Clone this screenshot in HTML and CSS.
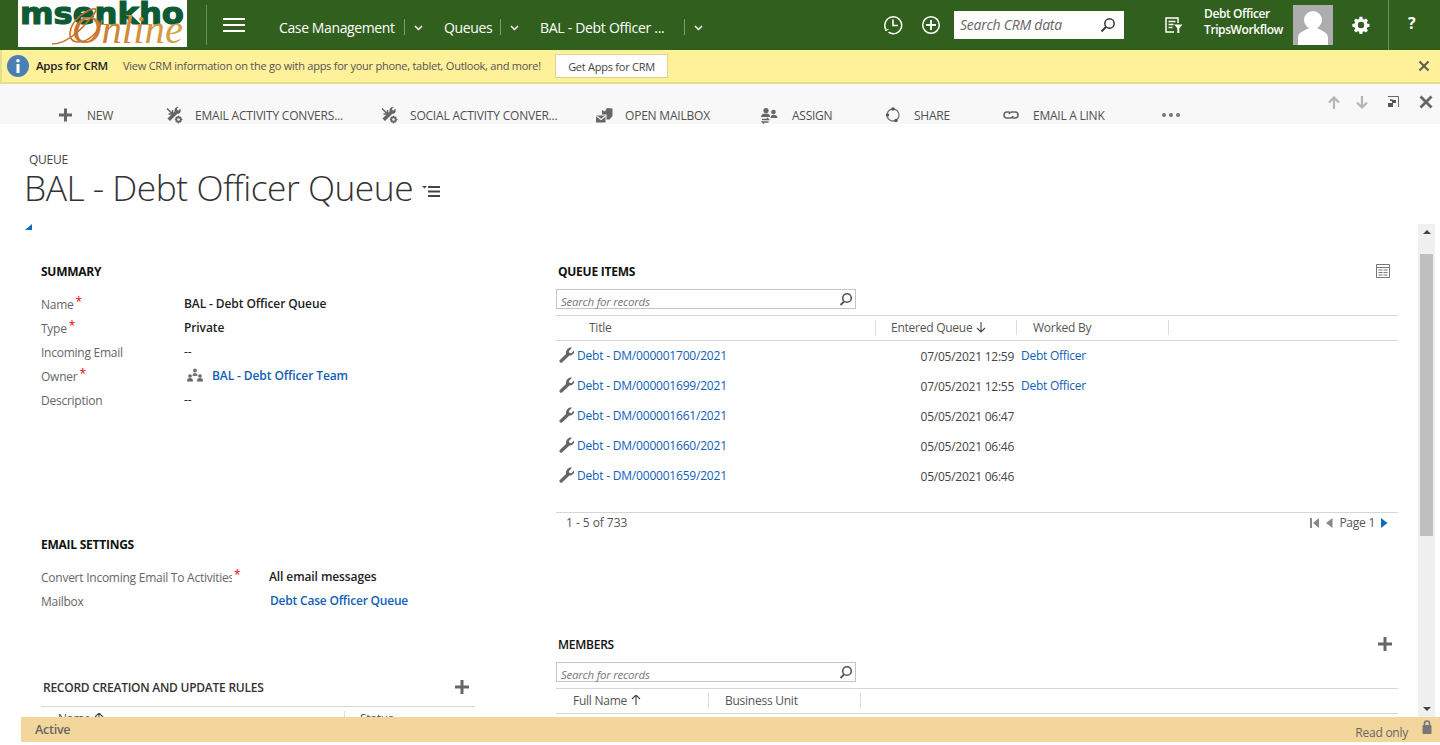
FILE: index.html
```html
<!DOCTYPE html>
<html lang="en">
<head>
<meta charset="utf-8">
<title>BAL - Debt Officer Queue</title>
<link rel="stylesheet" href="styles.css">
</head>
<body>
<header class="nav">
  <div class="logo">
    <svg width="169" height="47" viewBox="0 0 169 47">
      <defs><linearGradient id="lg" x1="0" x2="1" y1="0" y2="0"><stop offset="0" stop-color="#c8702a"/><stop offset="1" stop-color="#d6a648"/></linearGradient></defs>
      <text x="2" y="24" class="logo-top" textLength="164" lengthAdjust="spacingAndGlyphs">msenkho</text>
      <text x="54" y="43" class="logo-script" textLength="111" lengthAdjust="spacingAndGlyphs" fill="url(#lg)">Online</text>
      <path d="M34 44C52 44 68 24 76 14C82 6 72 8 62 16C50 26 48 42 60 42C72 42 82 30 84 20" fill="none" stroke="#c8702a" stroke-width="1.6"/>
    </svg>
  </div>
  <span class="nav-rule"></span>
  <span class="burger"><i></i><i></i><i></i></span>
  <nav class="crumbs">
    <span class="crumb c1">Case Management</span><span class="crumb-sep"></span><svg class="chev" width="9" height="6" viewBox="0 0 9 6"><path d="M1 1l3.500 3.500L8 1" fill="none" stroke="#fff" stroke-width="1.500"/></svg>
    <span class="crumb c2">Queues</span><span class="crumb-sep"></span><svg class="chev" width="9" height="6" viewBox="0 0 9 6"><path d="M1 1l3.500 3.500L8 1" fill="none" stroke="#fff" stroke-width="1.500"/></svg>
    <span class="crumb c3">BAL - Debt Officer ...</span><span class="crumb-sep"></span><svg class="chev" width="9" height="6" viewBox="0 0 9 6"><path d="M1 1l3.500 3.500L8 1" fill="none" stroke="#fff" stroke-width="1.500"/></svg>
  </nav>
  <svg class="ic-clock" width="20" height="20" viewBox="0 0 20 20"><path d="M3 14.500A8.400 8.400 0 1 1 5.500 17.200" fill="none" stroke="#fff" stroke-width="1.500"/><path d="M2 12.500l.8 3 2.600-1.200" fill="none" stroke="#fff" stroke-width="1.200"/><path d="M10 4.500V10.500H15" fill="none" stroke="#fff" stroke-width="1.600"/></svg>
  <svg class="ic-add" width="20" height="20" viewBox="0 0 20 20"><circle cx="10" cy="10" r="8.300" fill="none" stroke="#fff" stroke-width="1.500"/><path d="M10 5v10M5 10h10" stroke="#fff" stroke-width="1.800"/></svg>
  <div class="crm-search"><span>Search CRM data</span><svg width="16" height="16" viewBox="0 0 16 16"><circle cx="9.500" cy="6.500" r="4.700" fill="none" stroke="#333" stroke-width="1.500"/><path d="M6 10l-4.500 4.500" stroke="#333" stroke-width="1.800"/></svg></div>
  <svg class="ic-filter" width="18" height="17" viewBox="0 0 18 17"><path d="M13 6V1H1v14h8" fill="none" stroke="#fff" stroke-width="1.500"/><path d="M3.500 4.500h7M3.500 7.500h5M3.500 10.500h4" stroke="#fff" stroke-width="1.300"/><path d="M9 7.500h8.500l-3.200 3.700V16h-2v-4.800z" fill="#fff"/></svg>
  <div class="user"><div>Debt Officer</div><div>TripsWorkflow</div></div>
  <div class="avatar"><svg width="40" height="40" viewBox="0 0 40 40"><circle cx="20" cy="15" r="9" fill="#fff"/><path d="M5 40V33C5 27 11 26 16 23H24C29 26 35 27 35 33V40z" fill="#fff"/></svg></div>
  <svg class="ic-gear" width="18" height="18" viewBox="0 0 18 18"><path d="M7.500 1h3l.4 2.200 1.500.7 1.900-1.200 2.100 2.100-1.200 1.900.7 1.500 2.100.3v3l-2.200.4-.7 1.500 1.300 1.900-2.100 2.100-1.900-1.300-1.500.7-.4 2.200h-3l-.4-2.200-1.500-.7-1.900 1.300L1.700 15.300 3 13.400l-.7-1.500L0 11.500v-3l2.300-.4.7-1.500L1.700 4.800l2.100-2.100 1.900 1.200 1.400-.7z" transform="scale(.95) translate(.4 -.1)" fill="#fff"/><circle cx="9" cy="9" r="3.200" fill="#315f1d"/></svg>
  <span class="nav-rule rule-end"></span>
  <span class="help">?</span>
</header>

<section class="notice">
  <svg class="ic-info" width="22" height="22" viewBox="0 0 22 22"><circle cx="11" cy="11" r="11" fill="#4a7fb5"/><rect x="9.500" y="9" width="3" height="9" fill="#fff"/><circle cx="11" cy="5.800" r="1.800" fill="#fff"/></svg>
  <strong class="notice-title">Apps for CRM</strong>
  <span class="notice-text">View CRM information on the go with apps for your phone, tablet, Outlook, and more!</span>
  <span class="notice-btn">Get Apps for CRM</span>
  <svg class="notice-x" width="12" height="12" viewBox="0 0 12 12"><path d="M1.500 1.500l9 9M10.500 1.500l-9 9" stroke="#555" stroke-width="1.800"/></svg>
</section>

<section class="cmdbar">
  <div class="cmds">
    <div class="cmd"><svg width="16" height="16" viewBox="0 0 16 16"><path d="M7.500 1.500v13M1 8h13" stroke="#666" stroke-width="3"/></svg><span>NEW</span></div>
    <div class="cmd"><svg width="17" height="17" viewBox="0 0 17 17"><use href="#tools"/></svg><span class="cmd-tight">EMAIL ACTIVITY CONVERS...</span></div>
    <div class="cmd"><svg width="17" height="17" viewBox="0 0 17 17"><use href="#tools"/></svg><span class="cmd-tight">SOCIAL ACTIVITY CONVER...</span></div>
    <div class="cmd"><svg width="17" height="16" viewBox="0 0 17 16"><path d="M0 8.500h9.500V15.500H0z" fill="#666"/><path d="M.5 9l4.500 3.500L9.500 9" fill="none" stroke="#f8f8f8" stroke-width="1.200"/><path d="M6 7.500V3l3 1.500L11 1l5.500 0.500V9l-3 3.500H10.500V7.500z" fill="#666"/></svg><span class="cmd-tight">OPEN MAILBOX</span></div>
    <div class="cmd"><svg width="17" height="17" viewBox="0 0 17 17"><circle cx="5" cy="3.500" r="2.600" fill="#666"/><circle cx="12.500" cy="5" r="2.300" fill="#666"/><path d="M0 10c0-3 3-3.500 5-3.500s4 .5 4 3.500zM9.500 11c.5-2.500 1-3.300 3-3.300s4 .8 4 3.300z" fill="#666"/><path d="M1 12.500h6.500l-1.500-1.500M7.500 15H1.500l1.500 1.500" fill="none" stroke="#666" stroke-width="1.400"/></svg><span class="cmd-wide">ASSIGN</span></div>
    <div class="cmd"><svg width="16" height="16" viewBox="0 0 16 16"><circle cx="8" cy="8" r="6" fill="none" stroke="#777" stroke-width="1.300"/><circle cx="8" cy="2" r="1.700" fill="#555"/><circle cx="2.500" cy="8" r="1.700" fill="#555"/><circle cx="11" cy="13.500" r="1.700" fill="#555"/></svg><span>SHARE</span></div>
    <div class="cmd"><svg width="16" height="16" viewBox="0 0 16 16"><path d="M6.500 5H4a3 3 0 0 0 0 6h3.500a3 3 0 0 0 2.500-2M9.500 11H12a3 3 0 0 0 0-6H8.500A3 3 0 0 0 6 7" fill="none" stroke="#666" stroke-width="1.600"/></svg><span class="cmd-link">EMAIL A LINK</span></div>
    <div class="cmd-more"><i></i><i></i><i></i></div>
  </div>
  <div class="rec-tools">
    <svg width="12" height="13" viewBox="0 0 12 13"><path d="M6 13V2M1 6.500L6 1.500l5 5" fill="none" stroke="#b4b4b4" stroke-width="2.200"/></svg>
    <svg width="12" height="13" viewBox="0 0 12 13"><path d="M6 0v11M1 6.500l5 5 5-5" fill="none" stroke="#b4b4b4" stroke-width="2.200"/></svg>
    <svg width="12" height="12" viewBox="0 0 12 12"><path d="M1 .5h10.500V11" fill="none" stroke="#666"/><path d="M7 4h2v3H6v4H1V7h4V5H3V3z" fill="#555"/></svg>
    <svg width="14" height="14" viewBox="0 0 14 14"><path d="M1.500 1.500l11 11M12.500 1.500l-11 11" stroke="#666" stroke-width="2.800"/></svg>
  </div>
</section>

<svg class="defs" width="0" height="0">
  <defs>
    <g id="tools">
      <path d="M1 1.500 6 6.500M6.500 3V7H2.500" fill="none" stroke="#666" stroke-width="1.500"/>
      <path d="M14.500 1.500l-2 2-1.300-.6-.2-1.400 1.800-1.500C9.800-.3 8 1.800 8.700 4.200L1.500 11.500l2.500 2.500 7.300-7.200c2.600.6 4-1.800 3.200-5.300z" fill="#666"/>
      <circle cx="12.500" cy="12.500" r="2.300" fill="none" stroke="#666" stroke-width="1.900"/>
      <path d="M12.500 8.800v1.500M12.500 14.700v1.800M8.800 12.500h1.500M14.700 12.500h1.800M9.900 9.900l1 1M14.100 14.100l1 1M15.100 9.900l-1 1M10.900 14.100l-1 1" stroke="#666" stroke-width="1.200"/>
    </g>
    <path id="wrench" d="M14 .8 10.800 3.900l.6 1.900 1.900.5 2.800-3c.6 2.800-1.500 5.500-4.600 5.100L4 15.500c-1.200 1-3.300-.8-2.400-2.300L8 6.900C7.400 3.300 10.800-.4 14 .8z"/>
    <g id="lens"><circle cx="9" cy="6" r="4.300" fill="none" stroke="#555" stroke-width="1.600"/><path d="M6 9.500 2.500 13" stroke="#555" stroke-width="1.800"/></g>
    <path id="arrow-down" d="M5 0v10M1 6l4 4 4-4" fill="none" stroke="#444" stroke-width="1.100"/>
    <path id="arrow-up" d="M5 10V0M1 4l4-4 4 4" fill="none" stroke="#444" stroke-width="1.100"/>
  </defs>
</svg>

<header class="title-area">
  <div class="entity">QUEUE</div>
  <div class="title-row">
    <h1>BAL - Debt Officer Queue</h1>
    <svg class="ic-list" width="19" height="12" viewBox="0 0 19 12"><path d="M0 1h5L2.500 3.500z" fill="#444"/><path d="M6 2h12M6 6.500h12M6 11h12" stroke="#444" stroke-width="1.900"/></svg>
  </div>
</header>

<main class="sheet">
  <div class="col-left">
    <span class="collapse"></span>
    <h2 class="sec sec-summary">SUMMARY</h2>
    <div class="field"><label>Name<b class="req">*</b></label><span class="val">BAL - Debt Officer Queue</span></div>
    <div class="field"><label>Type<b class="req">*</b></label><span class="val">Private</span></div>
    <div class="field"><label>Incoming Email</label><span class="val plain">--</span></div>
    <div class="field"><label>Owner<b class="req">*</b></label><span class="val link"><svg class="ic-team" width="16" height="14" viewBox="0 0 16 14"><circle cx="8" cy="2.500" r="2" fill="#777"/><path d="M5.500 8c0-2 1-3 2.500-3s2.500 1 2.500 3z" fill="#777"/><circle cx="3" cy="8" r="1.800" fill="#666"/><path d="M0 13.500c0-2.500 1-3.500 3-3.500s3 1 3 3.500z" fill="#666"/><circle cx="13" cy="8" r="1.800" fill="#666"/><path d="M10 13.500c0-2.500 1-3.500 3-3.500s3 1 3 3.500z" fill="#666"/></svg>BAL - Debt Officer Team</span></div>
    <div class="field"><label>Description</label><span class="val plain">--</span></div>

    <h2 class="sec sec-email">EMAIL SETTINGS</h2>
    <div class="field field-wide"><label class="clip-label"><span class="clip">Convert Incoming Email To Activities</span><b class="req">*</b></label><span class="val">All email messages</span></div>
    <div class="field field-wide"><label>Mailbox</label><span class="val link nudge">Debt Case Officer Queue</span></div>

    <div class="sub-head">
      <h2 class="sec-light">RECORD CREATION AND UPDATE RULES</h2>
      <svg width="14" height="14" viewBox="0 0 14 14"><path d="M7 0v14M0 7h14" stroke="#666" stroke-width="3"/></svg>
    </div>
    <div class="grid-head rules-head">
      <div class="th">Name <svg class="sort" width="10" height="11" viewBox="0 0 10 11"><use href="#arrow-up"/></svg></div><div class="th">Status</div>
    </div>
  </div>

  <div class="col-right">
    <div class="head-row"><h2 class="sec">QUEUE ITEMS</h2>
      <svg width="14" height="14" viewBox="0 0 14 14"><path d="M.500.500h13v13H.500zM.500 3.500h13" fill="none" stroke="#777"/><path d="M2.500 6h4M7.500 6h4M2.500 8.500h4M7.500 8.500h4M2.500 11h4M7.500 11h4" stroke="#777"/></svg>
    </div>
    <div class="rec-search"><span>Search for records</span><svg width="16" height="14" viewBox="0 0 16 14"><use href="#lens"/></svg></div>
    <div class="grid-head items-cols">
      <div class="th th-title">Title</div><div class="th">Entered Queue <svg class="sort" width="10" height="11" viewBox="0 0 10 11"><use href="#arrow-down"/></svg></div><div class="th th-by">Worked By</div><div class="th"></div>
    </div>
    <div class="row items-cols"><div class="cell-title"><svg class="ic-wrench" width="16" height="16" viewBox="0 0 16 16"><use href="#wrench"/></svg><a>Debt - DM/000001700/2021</a></div><div class="cell-date">07/05/2021 12:59</div><div class="cell-by"><a>Debt Officer</a></div></div>
    <div class="row items-cols"><div class="cell-title"><svg class="ic-wrench" width="16" height="16" viewBox="0 0 16 16"><use href="#wrench"/></svg><a>Debt - DM/000001699/2021</a></div><div class="cell-date">07/05/2021 12:55</div><div class="cell-by"><a>Debt Officer</a></div></div>
    <div class="row items-cols"><div class="cell-title"><svg class="ic-wrench" width="16" height="16" viewBox="0 0 16 16"><use href="#wrench"/></svg><a>Debt - DM/000001661/2021</a></div><div class="cell-date">05/05/2021 06:47</div><div class="cell-by"></div></div>
    <div class="row items-cols"><div class="cell-title"><svg class="ic-wrench" width="16" height="16" viewBox="0 0 16 16"><use href="#wrench"/></svg><a>Debt - DM/000001660/2021</a></div><div class="cell-date">05/05/2021 06:46</div><div class="cell-by"></div></div>
    <div class="row items-cols"><div class="cell-title"><svg class="ic-wrench" width="16" height="16" viewBox="0 0 16 16"><use href="#wrench"/></svg><a>Debt - DM/000001659/2021</a></div><div class="cell-date">05/05/2021 06:46</div><div class="cell-by"></div></div>
    <div class="pager">
      <span class="pg-count">1 - 5 of 733</span>
      <div class="pages">
        <svg width="9" height="10" viewBox="0 0 9 10"><path d="M0 0h2v10H0zM9 0v10L3 5z" fill="#888"/></svg>
        <svg class="pg-prev" width="7" height="10" viewBox="0 0 7 10"><path d="M6.500 0v10L0 5z" fill="#888"/></svg>
        <span class="pg-label">Page 1</span>
        <svg width="7" height="10" viewBox="0 0 7 10"><path d="M0 0v10l6.500-5z" fill="#0f6cbd"/></svg>
      </div>
    </div>
    <div class="head-row members-head"><h2 class="sec sec-thin">MEMBERS</h2>
      <svg width="14" height="14" viewBox="0 0 14 14"><path d="M7 0v14M0 7h14" stroke="#666" stroke-width="3"/></svg>
    </div>
    <div class="rec-search"><span>Search for records</span><svg width="16" height="14" viewBox="0 0 16 14"><use href="#lens"/></svg></div>
    <div class="grid-head members-cols">
      <div class="th th-name">Full Name <svg class="sort" width="10" height="11" viewBox="0 0 10 11"><use href="#arrow-up"/></svg></div><div class="th th-by">Business Unit</div><div class="th"></div>
    </div>
  </div>

  <div class="scrollbar">
    <span class="arrow-up"></span>
    <div class="thumb-zone"><div class="thumb"></div></div>
    <span class="arrow-down"></span>
  </div>
</main>

<footer class="status">
  <strong>Active</strong>
  <div class="status-right"><span>Read only</span><svg width="10" height="14" viewBox="0 0 10 14"><path d="M2.500 6V3.500a2.500 2.500 0 0 1 5 0V6" fill="none" stroke="#777" stroke-width="1.600"/><rect x="0.500" y="5" width="9" height="9" rx="1" fill="#777"/></svg></div>
</footer>
</body>
</html>
```

FILE: styles.css
```css
* { box-sizing: border-box; }
html, body { margin: 0; height: 745px; overflow: hidden; background: #fff; }
body { font-family: "Open Sans", "Noto Sans", sans-serif; font-size: 12px; color: #444; letter-spacing: -0.25px; }
h1, h2 { margin: 0; font-weight: normal; }
a { color: #1160b7; }
.defs { display: block; height: 0; }

.nav { height: 50px; background: #315f1d; display: flex; align-items: center; color: #fff; }
.logo { width: 169px; height: 47px; margin-left: 18px; margin-top: -3px; background: #fff; flex: none; }
.logo svg { display: block; }
.logo-top { font-family: "DejaVu Sans", sans-serif; font-weight: 700; font-size: 31px; fill: #0d5a34; stroke: #0d5a34; stroke-width: 1.200px; letter-spacing: 0; }
.logo-script { font-family: "Liberation Serif", serif; font-style: italic; font-size: 40px; letter-spacing: 0; }
.nav-rule { width: 1px; height: 40px; background: #6d8f5e; margin-left: 19px; flex: none; }
.burger { width: 22px; margin-left: 16px; display: flex; flex-direction: column; gap: 4px; margin-top: -1px; }
.burger i { display: block; height: 2px; background: #fff; }
.crumbs { display: flex; align-items: center; margin-left: 34px; margin-top: 4px; width: 427px; flex: none; }
.crumb { font-size: 14px; width: 125px; white-space: nowrap; letter-spacing: -0.38px; }
.c2 { width: 56px; margin-left: 21px; }
.c3 { width: 144px; margin-left: 21px; letter-spacing: -0.3px; }
.crumb-sep { width: 1px; height: 16px; background: #7c9a6e; flex: none; }
.chev { margin-left: 9px; margin-top: 2px; flex: none; }
.ic-clock { margin-left: 177px; flex: none; }
.ic-add { margin-left: 18px; flex: none; }
.crm-search { width: 170px; height: 28px; background: #fff; margin-left: 13px; display: flex; align-items: center; justify-content: space-between; padding: 0 8px 0 6px; color: #666; font-style: italic; font-size: 14px; flex: none; }
.crm-search span { margin-bottom: 2px; }
.ic-filter { margin-left: 41px; flex: none; }
.user { width: 89px; margin-left: 21px; margin-top: -6px; font-size: 12px; font-weight: 600; line-height: 16px; white-space: nowrap; flex: none; letter-spacing: -0.4px; }
.avatar { width: 40px; height: 40px; background: #adadad; flex: none; overflow: hidden; }
.avatar svg { display: block; }
.ic-gear { margin-left: 19px; flex: none; }
.rule-end { height: 50px; margin-left: 18px; }
.help { font-size: 16px; font-weight: 700; margin-left: 19px; margin-top: -4px; }

.notice { height: 34px; background: #fff09a; border-bottom: 2px solid #e6dd8e; border-left: 2px solid #e6dd8e; display: flex; align-items: center; font-size: 11px; }
.ic-info { margin-left: 5px; flex: none; }
.notice-title { margin-left: 7px; width: 87px; font-weight: 600; font-size: 11.500px; color: #222; margin-bottom: 1px; }
.notice-text { width: 432px; white-space: nowrap; color: #555; letter-spacing: -0.245px; margin-bottom: 1px; }
.notice-btn { width: 113px; height: 24px; background: #fff; border: 1px solid #ddd38a; display: flex; align-items: center; justify-content: center; color: #444; }
.notice-x { margin-left: auto; margin-right: 10px; }

.cmdbar { height: 40px; background: #f8f8f8; display: flex; justify-content: space-between; }
.cmds { display: grid; grid-template-columns: 108px 215px 215px 165px 124px 118px 159px 40px; padding-left: 58px; align-self: flex-end; height: 18px; }
.cmd { display: flex; align-items: center; color: #505050; font-size: 12px; white-space: nowrap; }
.cmd svg { flex: none; }
.cmd span { margin-left: 13px; }
.cmd .cmd-tight { margin-left: 12px; letter-spacing: -0.2px; }
.cmd .cmd-wide { margin-left: 14px; }
.cmd .cmd-link { margin-left: 14px; }
.cmd-more { display: flex; align-items: center; gap: 3px; }
.cmd-more i { width: 4px; height: 4px; border-radius: 50%; background: #777; }
.rec-tools { display: flex; align-items: center; align-self: flex-start; gap: 16px; padding: 11px 7px 0 0; }
.rec-tools svg:nth-child(3) { margin-left: 3px; margin-right: 4px; }

.title-area { height: 100px; padding: 29px 0 0 24px; }
.entity { font-size: 12px; color: #444; margin-left: 5px; line-height: 14px; }
.title-row { display: flex; align-items: center; height: 36px; margin-top: 2px; }
h1 { font-size: 35.400px; font-weight: 300; color: #333; white-space: nowrap; line-height: 36px; letter-spacing: -0.5px; }
.ic-list { margin-left: 9px; margin-top: 8px; }

.sheet { height: 493px; margin-left: 21px; display: flex; overflow: hidden; }
.col-left { width: 535px; padding-left: 20px; flex: none; }
.col-right { width: 842px; flex: none; }
.collapse { display: block; width: 0; height: 0; margin-left: -16px; border-left: 7px solid transparent; border-bottom: 6px solid #0f6cbd; }
.sec { font-size: 12px; font-weight: 700; color: #111; line-height: 18px; }
.sec-summary { margin-top: 33px; margin-bottom: 11px; }
.sec-email { margin-top: 124px; margin-bottom: 11px; }
.sec-thin { font-weight: 600; }
.field { display: grid; grid-template-columns: 143px 1fr; height: 24px; align-items: center; }
.field-wide { grid-template-columns: 228px 1fr; }
.field label { color: #666; display: flex; }
.req { color: #f00; font-weight: normal; font-size: 12px; margin-left: 2px; margin-top: 2px; line-height: 8px; }
.clip-label { width: 228px; }
.clip { width: 191px; overflow: hidden; white-space: nowrap; }
.val { font-weight: 600; color: #222; display: flex; align-items: center; top: -1px; position: relative; letter-spacing: -0.1px; }
.val.plain { font-weight: 400; }
.val.link { color: #1160b7; }
.nudge { margin-left: 1px; letter-spacing: -0.2px; }
.ic-team { margin-right: 9px; margin-left: 3px; }
.sub-head { display: flex; justify-content: space-between; align-items: center; width: 434px; margin-top: 66px; height: 18px; padding: 0 6px 0 2px; }
.sub-head svg { margin-top: -2px; }
.sec-light { font-size: 12px; font-weight: 600; color: #333; line-height: 18px; }
.rules-head { width: 434px; margin-top: 9px; grid-template-columns: 303px 1fr; }
.rules-head { margin-top: 9px; }
.rules-head .th:first-child { padding-left: 17px; border-left: 0; }
.col-left .grid-head { margin-top: 9px; }

.head-row { display: flex; justify-content: space-between; align-items: center; height: 18px; margin-top: 39px; padding: 0 8px 0 2px; }
.head-row svg { margin-top: -2px; }
.members-head { margin-top: 103px; padding-right: 6px; }
.rec-search { width: 300px; height: 20px; margin-top: 8px; border: 1px solid #c4c4c4; display: flex; justify-content: space-between; align-items: center; padding: 0 1px 0 4px; color: #777; font-style: italic; font-size: 11.500px; }
.rec-search span { position: relative; top: 2px; }
.grid-head { display: grid; height: 26px; margin-top: 6px; padding-bottom: 2px; border-top: 1px solid #d6d6d6; border-bottom: 1px solid #d6d6d6; align-items: center; color: #555; }
.items-cols { grid-template-columns: 319px 141px 152px 1fr; }
.members-cols { grid-template-columns: 152px 152px 1fr; }
.th { height: 15px; border-left: 1px solid #dcdcdc; padding-left: 15px; line-height: 15px; white-space: nowrap; }
.th-title { border-left: 0; padding-left: 33px; }
.th-name { border-left: 0; padding-left: 17px; }
.th-by { padding-left: 16px; }
.sort { margin-left: 1px; vertical-align: -1px; }
.row { height: 30px; display: grid; align-items: center; }
.cell-title { display: flex; align-items: center; padding-left: 2px; margin-top: -2px; letter-spacing: -0.2px; }
.ic-wrench { fill: #666; margin-right: 3px; flex: none; }
.cell-date { text-align: right; padding-right: 2px; color: #444; white-space: nowrap; }
.cell-by { padding-left: 5px; margin-top: -1px; }
.pager { display: flex; justify-content: space-between; align-items: center; height: 21px; margin-top: 21px; padding: 0 10px 2px 10px; border-top: 1px solid #d6d6d6; color: #555; }
.pg-count { letter-spacing: -0.05px; }
.pages { display: flex; align-items: center; margin-top: 2px; }
.pg-prev { margin-left: 7px; }
.pg-label { margin: 0 6px 1px 6px; }

.scrollbar { width: 17px; margin-left: 20px; background: #f0f0f0; display: flex; flex-direction: column; align-items: center; flex: none; padding-top: 6px; }
.arrow-up { width: 0; height: 0; border: 4px solid transparent; border-top: 0; border-bottom: 4px solid #444; flex: none; }
.thumb-zone { width: 13px; height: 473px; flex: none; }
.thumb { width: 13px; height: 282px; margin-top: 20px; background: #bfbfbf; }
.arrow-down { width: 0; height: 0; border: 4px solid transparent; border-bottom: 0; border-top: 4px solid #444; flex: none; }

.status { height: 25px; margin-left: 21px; background: #f3d69c; display: flex; justify-content: space-between; align-items: center; padding: 0 8px 0 14px; color: #666; }
.status strong { font-weight: 600; font-size: 12.500px; }
.status-right { display: flex; align-items: center; gap: 14px; }
.status-right span { margin-top: 5px; }
.status-right svg { margin-top: -6px; }
```
